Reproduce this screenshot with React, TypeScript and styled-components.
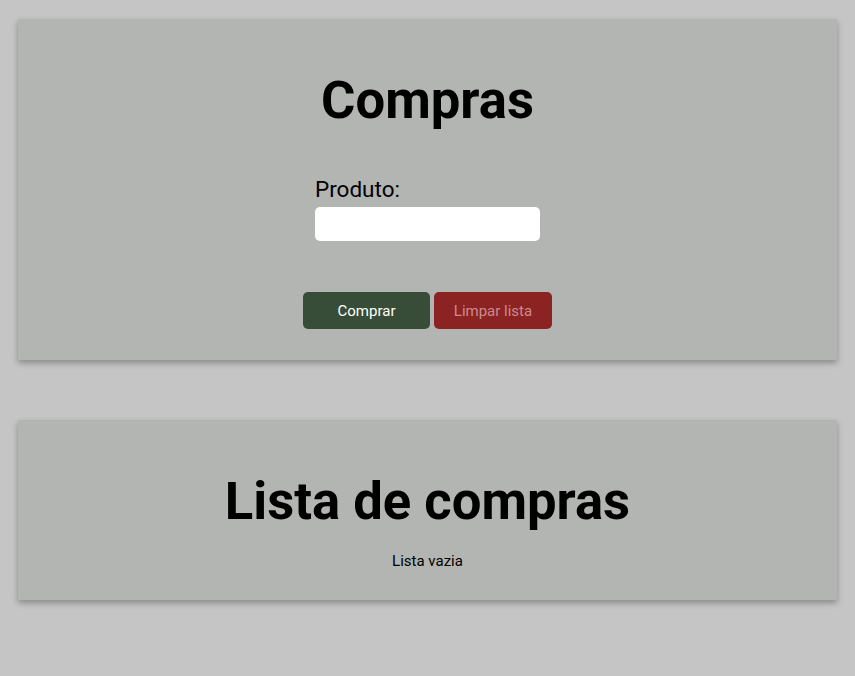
import React from "react";
import styled, { createGlobalStyle } from "styled-components";

const Global = createGlobalStyle`
  html, body { margin: 0; padding: 0; background: #c5c5c5; }
  body { font-family: Roboto, "Noto Sans", sans-serif; }
`;

const Page = styled.div`
  padding: 19px 18px 40px;
  display: flex;
  flex-direction: column;
  gap: 60px;
`;

const Card = styled.section<{ $pad: string }>`
  background: #b3b5b2;
  box-shadow: 0 3px 6px rgba(0, 0, 0, 0.3);
  padding: ${(p) => p.$pad};
  display: flex;
  flex-direction: column;
  align-items: center;
`;

const Title = styled.h1`
  margin: 0;
  font-size: 52.6px;
  font-weight: 700;
  color: #000;
  line-height: 62px;
`;

const Field = styled.div`
  display: flex;
  flex-direction: column;
  margin-top: 45px;
`;

const Label = styled.label`
  font-size: 22.5px;
  color: #000;
  line-height: 27px;
  margin-bottom: 4px;
`;

const Input = styled.input`
  width: 225px;
  height: 34px;
  box-sizing: border-box;
  border: none;
  border-radius: 5px;
  background: #fff;
  outline: none;
`;

const Buttons = styled.div`
  display: flex;
  gap: 4px;
  margin-top: 51px;
`;

const Button = styled.button<{ $bg: string; $fg: string; $w: number }>`
  width: ${(p) => p.$w}px;
  height: 37px;
  border: none;
  border-radius: 5px;
  background: ${(p) => p.$bg};
  color: ${(p) => p.$fg};
  font-family: Roboto, sans-serif;
  font-size: 15px;
`;

const Empty = styled.p`
  margin: 20px 0 0;
  font-size: 15px;
  color: #000;
`;

export default function App() {
  return (
    <>
      <Global />
      <Page>
        <Card $pad="50px 0 31px">
          <Title>Compras</Title>
          <Field>
            <Label>Produto:</Label>
            <Input />
          </Field>
          <Buttons>
            <Button $bg="#384d38" $fg="#ffffff" $w={127}>Comprar</Button>
            <Button $bg="#8b2323" $fg="#cc8a8e" $w={118}>Limpar lista</Button>
          </Buttons>
        </Card>
        <Card $pad="50px 0 30px">
          <Title>Lista de compras</Title>
          <Empty>Lista vazia</Empty>
        </Card>
      </Page>
    </>
  );
}
